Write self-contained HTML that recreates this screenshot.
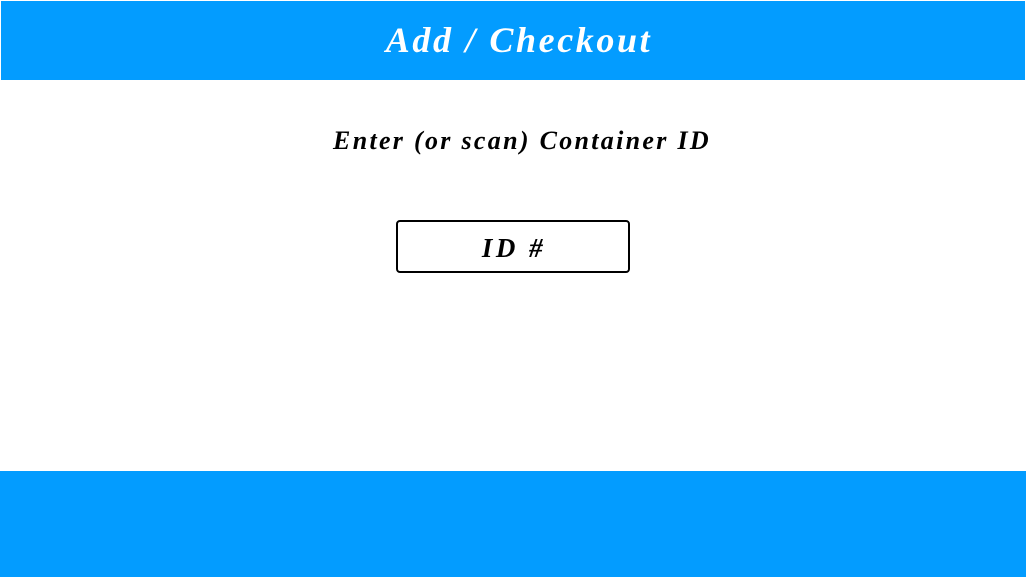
<!DOCTYPE html>
<html><head><style>
html,body{margin:0;padding:0;width:1026px;height:577px;background:#fff;overflow:hidden;position:relative;font-family:"Liberation Serif",serif;font-style:italic;font-weight:bold}
.hdr{position:absolute;left:1px;top:1px;width:1012px;padding-left:12px;height:79px;background:#039cff;color:#fff;text-align:center;font-size:36px;letter-spacing:2.6px;line-height:79px}
.t{position:absolute;left:0;width:1008px;padding-left:18px;top:124px;text-align:center;font-size:26px;letter-spacing:2.3px;line-height:34px;color:#000}
.box{position:absolute;left:396px;top:220px;width:228px;height:49px;border:2px solid #000;border-radius:4px;text-align:center;font-size:27px;letter-spacing:3.5px;line-height:53px;color:#000;padding-left:2px;box-sizing:content-box}
.ftr{position:absolute;left:0;top:471px;width:1026px;height:106px;background:#039cff}
</style></head><body>
<div class="hdr">Add / Checkout</div>
<div class="t">Enter (or scan) Container ID</div>
<div class="box">ID #</div>
<div class="ftr"></div>
</body></html>
